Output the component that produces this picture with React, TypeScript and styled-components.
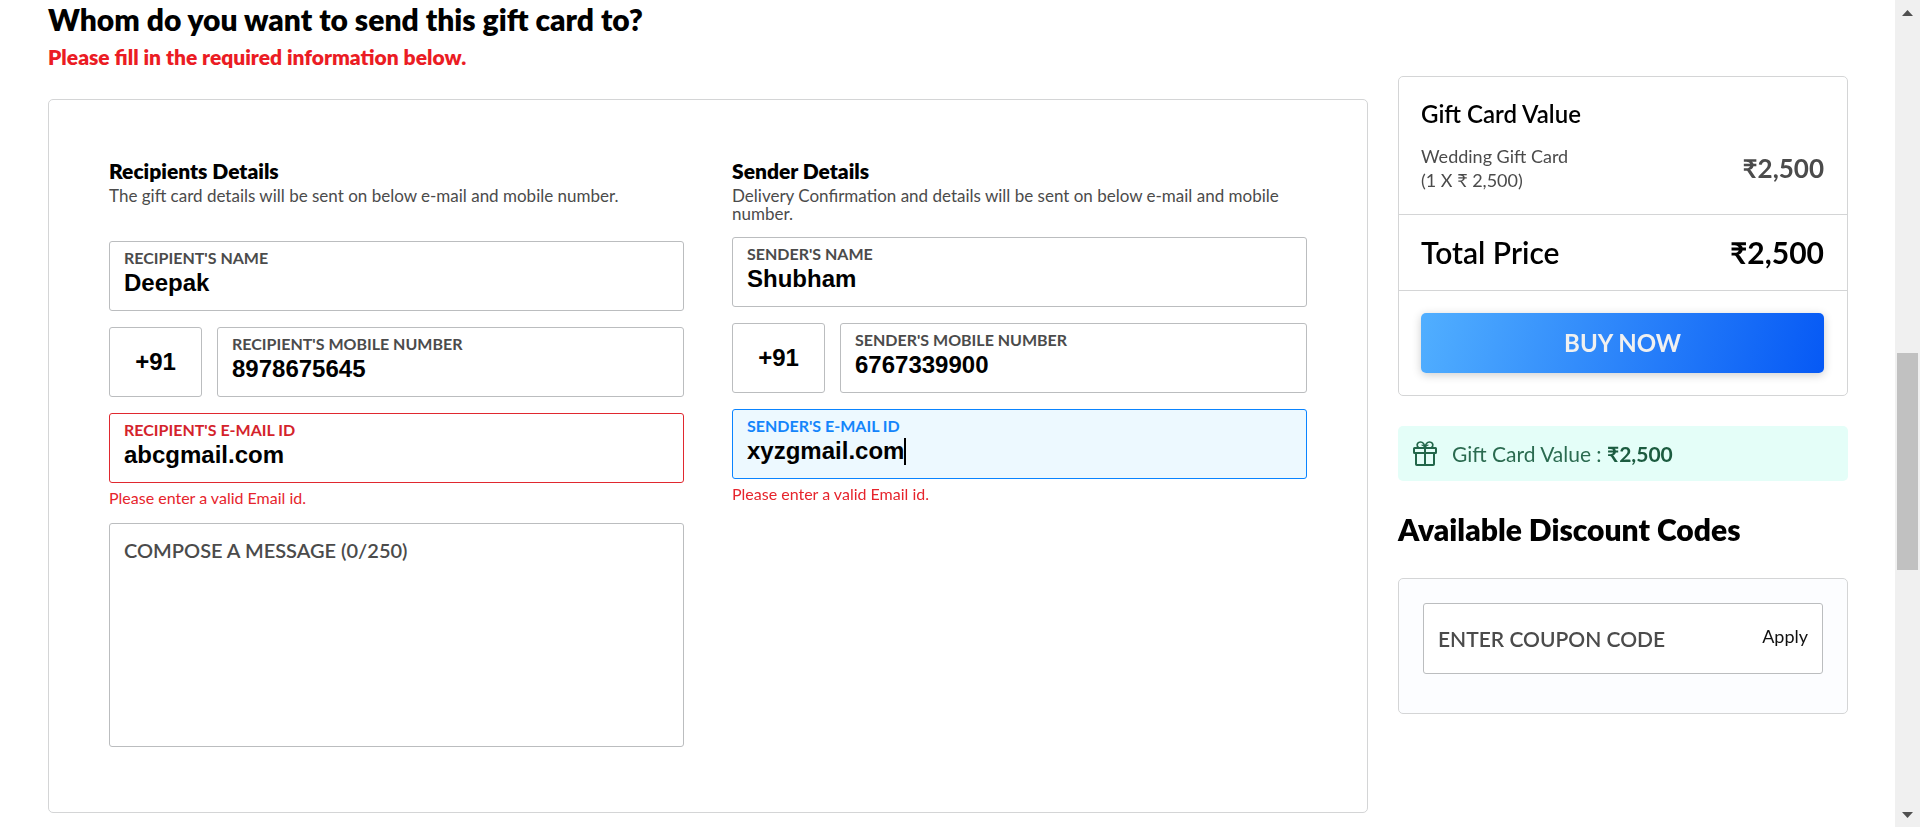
import React, { useState } from "react";
import styled, { createGlobalStyle, css } from "styled-components";

const GlobalStyle = createGlobalStyle`
  *, *::before, *::after { box-sizing: border-box; }
  body {
    margin: 0;
    background: #ffffff;
    color: #000000;
    font-family: Lato, "Liberation Sans", sans-serif;
  }
  h1, h2, h3, p, form { margin: 0; }
  button, input, textarea { font-family: inherit; }
`;

const Shell = styled.div`
  display: grid;
  grid-template-columns: minmax(0, 1fr) 25px;
`;

const Page = styled.main`
  display: grid;
  grid-template-columns: minmax(0, 1fr) 450px;
  gap: 30px;
  align-items: start;
  padding: 0 47px 0 48px;
`;

const PageTitle = styled.h1`
  font-size: 30px;
  line-height: 38px;
  font-weight: 800;
`;

const Alert = styled.p`
  margin-bottom: 23px;
  font-size: 21px;
  line-height: 38px;
  font-weight: 800;
  color: #eb1c24;
`;

const FormCard = styled.form`
  display: grid;
  grid-template-columns: repeat(2, minmax(0, 1fr));
  gap: 48px;
  padding: 58px 60px 65px;
  border: 1px solid #d4d5d6;
  border-radius: 5px;
`;

const PartyHeader = styled.header`
  margin-bottom: 14px;
`;

const PartyFields = styled.div`
  display: flex;
  flex-direction: column;
  gap: 16px;
`;

const PartyTitle = styled.h2`
  margin-bottom: 3px;
  font-size: 21px;
  line-height: 26px;
  font-weight: 800;
`;

const PartyNote = styled.p<{ $tall?: boolean }>`
  min-height: ${({ $tall }) => ($tall ? 40 : 36)}px;
  font-size: 17px;
  line-height: 18px;
  color: #4b4b4b;
`;

type Tone = "plain" | "error" | "active";

const toneBorder: Record<Tone, string> = { plain: "#bbbdbf", error: "#e0282f", active: "#0a84ff" };
const toneLabel: Record<Tone, string> = { plain: "#4b4b4b", error: "#d4232b", active: "#1485fb" };

const FieldBox = styled.div<{ $tone: Tone }>`
  display: flex;
  flex-direction: column;
  height: 70px;
  padding: 7px 14px;
  border: 1px solid ${({ $tone }) => toneBorder[$tone]};
  border-radius: 3px;
  background: ${({ $tone }) => ($tone === "active" ? "#edf9ff" : "#ffffff")};
`;

const FieldLabel = styled.label<{ $tone: Tone }>`
  font-size: 16px;
  line-height: 18px;
  font-weight: 700;
  color: ${({ $tone }) => toneLabel[$tone]};
`;

const FieldLine = styled.div`
  display: flex;
  align-items: center;
  height: 32px;
`;

const FieldInput = styled.input<{ $fit: boolean }>`
  width: 100%;
  height: 28px;
  padding: 0;
  border: 0;
  outline: 0;
  background: transparent;
  font: 700 24px/28px "Liberation Sans", Arial, sans-serif;
  color: #000000;
  ${({ $fit }) =>
    $fit &&
    css`
      field-sizing: content;
      width: auto;
      max-width: 100%;
      caret-color: transparent;
    `}
`;

const Caret = styled.span`
  flex: none;
  width: 2px;
  height: 27px;
  background: #000000;
`;

const FieldError = styled.p`
  margin-top: 6px;
  font-size: 16px;
  line-height: 18px;
  color: #e6242c;
`;

const PhoneRow = styled.div`
  display: grid;
  grid-template-columns: 93px minmax(0, 1fr);
  gap: 15px;
`;

const DialCode = styled.input`
  width: 100%;
  height: 70px;
  padding: 0;
  border: 1px solid #bbbdbf;
  border-radius: 3px;
  background: #ffffff;
  text-align: center;
  font: 700 24px/28px "Liberation Sans", Arial, sans-serif;
  color: #000000;
`;

const MessageBox = styled.div`
  display: flex;
  flex-direction: column;
  height: 224px;
  padding: 14px;
  border: 1px solid #bbbdbf;
  border-radius: 3px;
  background: #ffffff;
`;

const MessageLabel = styled.label`
  font-size: 20px;
  line-height: 24px;
  font-weight: 600;
  color: #4b4b4b;
`;

const MessageInput = styled.textarea`
  flex: 1;
  padding: 0;
  border: 0;
  outline: 0;
  resize: none;
  background: transparent;
  font-size: 20px;
`;

const Sidebar = styled.aside`
  margin-top: 76px;
`;

const SummaryCard = styled.section`
  border: 1px solid #d4d5d6;
  border-radius: 5px;
`;

const SummaryPart = styled.div`
  padding: 22px 23px 22px 22px;
  & + & { border-top: 1px solid #d4d5d6; }
`;

const ItemPart = styled(SummaryPart)`
  padding-top: 23px;
`;

const TotalPart = styled(SummaryPart)`
  padding-top: 19px;
  padding-bottom: 20px;
  border-top: 1px solid #d4d5d6;
`;

const SummaryTitle = styled.h2`
  margin-bottom: 16px;
  font-size: 24px;
  line-height: 28px;
  font-weight: 600;
`;

const SummaryRow = styled.div`
  display: flex;
  justify-content: space-between;
  align-items: center;
`;

const ItemText = styled.p`
  font-size: 18px;
  line-height: 24px;
  color: #4b4b4b;
`;

const ItemPrice = styled.strong`
  font-size: 26px;
  font-weight: 700;
  color: #4b4b4b;
`;

const TotalText = styled.span`
  font-size: 30px;
  line-height: 36px;
  font-weight: 600;
`;

const TotalPrice = styled(TotalText)`
  font-weight: 700;
`;

const BuyButton = styled.button`
  display: block;
  width: 100%;
  height: 60px;
  padding: 0 0 2px;
  border: 0;
  border-radius: 5px;
  background: linear-gradient(104deg, #51afff, #0659f5);
  box-shadow: 0 2px 10px rgba(0, 0, 0, 0.2);
  font-size: 24px;
  font-weight: 700;
  color: #f0f0f0;
`;

const ValueBanner = styled.div`
  display: flex;
  align-items: center;
  gap: 15px;
  height: 55px;
  margin-top: 30px;
  padding: 0 15px;
  border-radius: 5px;
  background: #e4fef8;
  font-size: 21px;
  color: #2b6b50;
  svg { flex: none; }
  strong { color: #1c5c40; }
`;

const CodesTitle = styled.h2`
  margin: 30px 0;
  font-size: 30px;
  line-height: 37px;
  font-weight: 800;
`;

const CouponCard = styled.form`
  padding: 24px 24px 39px;
  border: 1px solid #d4d5d6;
  border-radius: 5px;
  background: #fcfdff;
`;

const CouponBox = styled.div`
  display: flex;
  align-items: center;
  height: 71px;
  padding: 0 14px;
  border: 1px solid #bbbdbf;
  border-radius: 3px;
  background: #ffffff;
`;

const CouponInput = styled.input`
  flex: 1;
  min-width: 0;
  height: 40px;
  padding: 0;
  border: 0;
  outline: 0;
  background: transparent;
  font-size: 21px;
  font-weight: 600;
  &::placeholder { color: #4b4b4b; opacity: 1; }
`;

const ApplyButton = styled.button`
  padding: 0 0 6px;
  border: 0;
  background: transparent;
  font-size: 18px;
  color: #111111;
`;

const Scrollbar = styled.div`
  position: sticky;
  top: 0;
  display: grid;
  grid-template-rows: 25px minmax(0, 1fr) 25px;
  justify-items: center;
  align-items: center;
  height: 100vh;
  background: #f0f0f0;
`;

const ScrollTrack = styled.div`
  display: grid;
  grid-template-rows: 328fr 217fr 232fr;
  width: 21px;
  height: 100%;
`;

const ScrollThumb = styled.div`
  grid-row: 2;
  background: #c1c1c1;
`;

interface FieldProps {
  id: string;
  label: string;
  initial: string;
  type?: string;
  tone?: Tone;
}

function Field({ id, label, initial, type = "text", tone = "plain" }: FieldProps) {
  const [value, setValue] = useState(initial);
  const active = tone === "active";
  return (
    <FieldBox $tone={tone}>
      <FieldLabel htmlFor={id} $tone={tone}>{label}</FieldLabel>
      <FieldLine>
        <FieldInput
          id={id}
          type={type}
          value={value}
          $fit={active}
          autoFocus={active}
          onChange={(e) => setValue(e.target.value)}
        />
        {active && <Caret aria-hidden="true" />}
      </FieldLine>
    </FieldBox>
  );
}

function GiftIcon() {
  return (
    <svg width="24" height="25" viewBox="0 0 24 25" fill="none" stroke="#22664a" strokeWidth="2" aria-hidden="true">
      <rect x="1" y="7" width="22" height="5" rx="0.5" />
      <path d="M3 12v11.2q0 .8.8.8h16.4q.8 0 .8-.8V12M12 7v17" />
      <path
        d="M12 7C11.500 3 10 1 7.500 1C5 1 3.600 3.200 4.400 5.200L5.800 7M12 7C12.500 3 14 1 16.500 1C19 1 20.400 3.200 19.600 5.200L18.200 7"
        strokeWidth="1.7"
      />
      <path d="M8.500 4Q11.300 4.300 12 7Q12.700 4.300 15.500 4" strokeWidth="1.2" />
    </svg>
  );
}

export default function App() {
  return (
    <>
      <GlobalStyle />
      <Shell>
        <Page>
          <div>
            <PageTitle>Whom do you want to send this gift card to?</PageTitle>
            <Alert>Please fill in the required information below.</Alert>
            <FormCard>
              <section>
                <PartyHeader>
                  <PartyTitle>Recipients Details</PartyTitle>
                  <PartyNote $tall>The gift card details will be sent on below e-mail and mobile number.</PartyNote>
                </PartyHeader>
                <PartyFields>
                  <Field id="recipient-name" label="RECIPIENT'S NAME" initial="Deepak" />
                  <PhoneRow>
                    <DialCode aria-label="Recipient's country code" defaultValue="+91" />
                    <Field id="recipient-mobile" type="tel" label="RECIPIENT'S MOBILE NUMBER" initial="8978675645" />
                  </PhoneRow>
                  <div>
                    <Field id="recipient-email" label="RECIPIENT'S E-MAIL ID" initial="abcgmail.com" tone="error" />
                    <FieldError>Please enter a valid Email id.</FieldError>
                  </div>
                  <MessageBox>
                    <MessageLabel htmlFor="message">COMPOSE A MESSAGE (0/250)</MessageLabel>
                    <MessageInput id="message" maxLength={250} />
                  </MessageBox>
                </PartyFields>
              </section>
              <section>
                <PartyHeader>
                  <PartyTitle>Sender Details</PartyTitle>
                  <PartyNote>
                    Delivery Confirmation and details will be sent on below e-mail and mobile number.
                  </PartyNote>
                </PartyHeader>
                <PartyFields>
                  <Field id="sender-name" label="SENDER'S NAME" initial="Shubham" />
                  <PhoneRow>
                    <DialCode aria-label="Sender's country code" defaultValue="+91" />
                    <Field id="sender-mobile" type="tel" label="SENDER'S MOBILE NUMBER" initial="6767339900" />
                  </PhoneRow>
                  <div>
                    <Field id="sender-email" label="SENDER'S E-MAIL ID" initial="xyzgmail.com" tone="active" />
                    <FieldError>Please enter a valid Email id.</FieldError>
                  </div>
                </PartyFields>
              </section>
            </FormCard>
          </div>

          <Sidebar>
            <SummaryCard>
              <ItemPart>
                <SummaryTitle>Gift Card Value</SummaryTitle>
                <SummaryRow>
                  <ItemText>
                    Wedding Gift Card
                    <br />
                    (1 X ₹ 2,500)
                  </ItemText>
                  <ItemPrice>₹2,500</ItemPrice>
                </SummaryRow>
              </ItemPart>
              <TotalPart>
                <SummaryRow>
                  <TotalText>Total Price</TotalText>
                  <TotalPrice>₹2,500</TotalPrice>
                </SummaryRow>
              </TotalPart>
              <SummaryPart>
                <BuyButton type="button">BUY NOW</BuyButton>
              </SummaryPart>
            </SummaryCard>

            <ValueBanner>
              <GiftIcon />
              <span>
                Gift Card Value : <strong>₹2,500</strong>
              </span>
            </ValueBanner>

            <CodesTitle>Available Discount Codes</CodesTitle>
            <CouponCard>
              <CouponBox>
                <CouponInput aria-label="Coupon code" placeholder="ENTER COUPON CODE" />
                <ApplyButton type="button">Apply</ApplyButton>
              </CouponBox>
            </CouponCard>
          </Sidebar>
        </Page>

        <Scrollbar aria-hidden="true">
          <svg width="11" height="6" viewBox="0 0 11 6"><path d="M0 6 5.500 0 11 6z" fill="#505050" /></svg>
          <ScrollTrack>
            <ScrollThumb />
          </ScrollTrack>
          <svg width="11" height="6" viewBox="0 0 11 6"><path d="M0 0 5.500 6 11 0z" fill="#505050" /></svg>
        </Scrollbar>
      </Shell>
    </>
  );
}
